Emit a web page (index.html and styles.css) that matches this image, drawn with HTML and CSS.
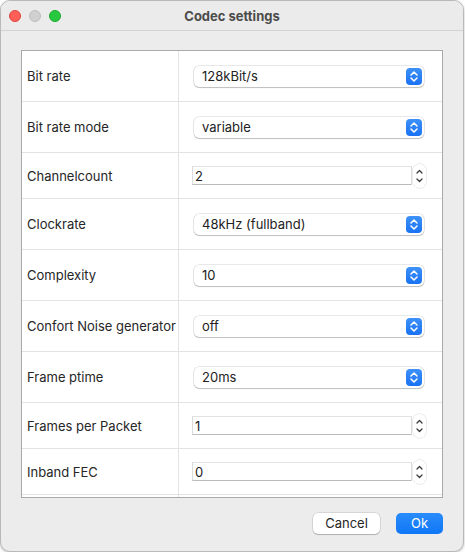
FILE: index.html
```html
<!DOCTYPE html>
<html>
<head>
<meta charset="utf-8">
<link rel="stylesheet" href="styles.css">
</head>
<body>
<div class="window">
  <div class="titlebar">
    <div class="lights">
      <span class="light red"></span>
      <span class="light gray"></span>
      <span class="light green"></span>
    </div>
    <div class="title">Codec settings</div>
  </div>
  <div class="content">
    <div class="table">
      <div class="row combo-row">
        <div class="label">Bit rate</div>
        <div class="value"><div class="popup"><span class="ptext">128kBit/s</span><span class="pbtn"><svg width="16" height="17" viewBox="0 0 16 17"><path d="M5 7 L8 4 L11 7 M5 10 L8 13 L11 10" fill="none" stroke="#fff" stroke-width="1.5" stroke-linecap="round" stroke-linejoin="round"/></svg></span></div></div>
      </div>
      <div class="row combo-row">
        <div class="label">Bit rate mode</div>
        <div class="value"><div class="popup"><span class="ptext">variable</span><span class="pbtn"><svg width="16" height="17" viewBox="0 0 16 17"><path d="M5 7 L8 4 L11 7 M5 10 L8 13 L11 10" fill="none" stroke="#fff" stroke-width="1.5" stroke-linecap="round" stroke-linejoin="round"/></svg></span></div></div>
      </div>
      <div class="row spin-row">
        <div class="label">Channelcount</div>
        <div class="value"><div class="field">2</div><span class="stepper"><svg width="13" height="24" viewBox="0 0 13 24"><path d="M4 9 L6.5 6.5 L9 9 M4 15 L6.5 17.5 L9 15" fill="none" stroke="#3a3a3a" stroke-width="1.3" stroke-linecap="round" stroke-linejoin="round"/></svg></span></div>
      </div>
      <div class="row combo-row">
        <div class="label">Clockrate</div>
        <div class="value"><div class="popup"><span class="ptext">48kHz (fullband)</span><span class="pbtn"><svg width="16" height="17" viewBox="0 0 16 17"><path d="M5 7 L8 4 L11 7 M5 10 L8 13 L11 10" fill="none" stroke="#fff" stroke-width="1.5" stroke-linecap="round" stroke-linejoin="round"/></svg></span></div></div>
      </div>
      <div class="row combo-row">
        <div class="label">Complexity</div>
        <div class="value"><div class="popup"><span class="ptext">10</span><span class="pbtn"><svg width="16" height="17" viewBox="0 0 16 17"><path d="M5 7 L8 4 L11 7 M5 10 L8 13 L11 10" fill="none" stroke="#fff" stroke-width="1.5" stroke-linecap="round" stroke-linejoin="round"/></svg></span></div></div>
      </div>
      <div class="row combo-row">
        <div class="label">Confort Noise generator</div>
        <div class="value"><div class="popup"><span class="ptext">off</span><span class="pbtn"><svg width="16" height="17" viewBox="0 0 16 17"><path d="M5 7 L8 4 L11 7 M5 10 L8 13 L11 10" fill="none" stroke="#fff" stroke-width="1.5" stroke-linecap="round" stroke-linejoin="round"/></svg></span></div></div>
      </div>
      <div class="row combo-row">
        <div class="label">Frame ptime</div>
        <div class="value"><div class="popup"><span class="ptext">20ms</span><span class="pbtn"><svg width="16" height="17" viewBox="0 0 16 17"><path d="M5 7 L8 4 L11 7 M5 10 L8 13 L11 10" fill="none" stroke="#fff" stroke-width="1.5" stroke-linecap="round" stroke-linejoin="round"/></svg></span></div></div>
      </div>
      <div class="row spin-row">
        <div class="label">Frames per Packet</div>
        <div class="value"><div class="field">1</div><span class="stepper"><svg width="13" height="24" viewBox="0 0 13 24"><path d="M4 9 L6.5 6.5 L9 9 M4 15 L6.5 17.5 L9 15" fill="none" stroke="#3a3a3a" stroke-width="1.3" stroke-linecap="round" stroke-linejoin="round"/></svg></span></div>
      </div>
      <div class="row spin-row">
        <div class="label">Inband FEC</div>
        <div class="value"><div class="field">0</div><span class="stepper"><svg width="13" height="24" viewBox="0 0 13 24"><path d="M4 9 L6.5 6.5 L9 9 M4 15 L6.5 17.5 L9 15" fill="none" stroke="#3a3a3a" stroke-width="1.3" stroke-linecap="round" stroke-linejoin="round"/></svg></span></div>
      </div>
      <div class="filler">
        <div class="fl"></div><div class="fr"></div>
      </div>
    </div>
    <div class="buttons">
      <button class="btn cancel">Cancel</button>
      <button class="btn ok">Ok</button>
    </div>
  </div>
</div>
</body>
</html>
```
FILE: styles.css
```css
html, body {
  margin: 0;
  padding: 0;
  background: #ffffff;
}
body {
  font-family: Inter, "Liberation Sans", Arial, sans-serif;
  font-size: 13px;
  color: #262626;
}
.window {
  box-sizing: border-box;
  width: 464px;
  height: 552px;
  border: 1px solid #b9b9b9;
  border-radius: 10px;
  background: #ececec;
  overflow: hidden;
  display: flex;
  flex-direction: column;
  box-shadow: 0 1px 3px rgba(0,0,0,0.25);
}
.titlebar {
  box-sizing: border-box;
  height: 30px;
  border-bottom: 1px solid #d3d3d3;
  background: #ebebeb;
  display: flex;
  align-items: center;
  position: relative;
}
.lights {
  display: flex;
  gap: 8px;
  padding-left: 8px;
}
.light {
  width: 12px;
  height: 12px;
  border-radius: 50%;
  box-sizing: border-box;
}
.red { background: #fe5f57; border: 0.5px solid #e0443e; }
.gray { background: #d0d0d0; border: 0.5px solid #bdbdbd; }
.green { background: #28c840; border: 0.5px solid #1aab29; }
.title {
  position: absolute;
  left: 0;
  right: 0;
  top: 0;
  bottom: 0;
  display: flex;
  align-items: center;
  justify-content: center;
  font-weight: bold;
  font-size: 13px;
  color: #4b4b4b;
}
.content {
  padding: 19px 20px 0 20px;
  display: flex;
  flex-direction: column;
}
.table {
  box-sizing: border-box;
  height: 448px;
  border: 1px solid #a9a9a9;
  background: #ffffff;
  display: flex;
  flex-direction: column;
}
.row {
  display: grid;
  grid-template-columns: 157px 1fr;
  border-bottom: 1px solid #e3e3e3;
}
.combo-row { height: 50px; }
.spin-row { height: 45px; }
.label {
  display: flex;
  align-items: center;
  padding-left: 5px;
  border-right: 1px solid #e3e3e3;
  white-space: nowrap;
}
.value {
  display: flex;
  align-items: center;
}
.popup {
  box-sizing: border-box;
  margin-left: 15px;
  width: 230px;
  height: 21px;
  background: #ffffff;
  border-radius: 5px;
  box-shadow: 0 0 0 0.5px rgba(0,0,0,0.18), 0 1px 1px rgba(0,0,0,0.18);
  display: flex;
  align-items: center;
  justify-content: space-between;
  padding: 0 2px 0 8px;
}
.ptext { color: #222; }
.pbtn {
  width: 16px;
  height: 17px;
  border-radius: 4px;
  background: linear-gradient(#3d91f8, #1a72f3);
  display: flex;
}
.field {
  box-sizing: border-box;
  margin-left: 13px;
  width: 220px;
  height: 19px;
  background: #fff;
  border: 1px solid #dcdcdc;
  border-bottom-color: #bcbcbc;
  border-top-color: #e2e2e2;
  padding: 1px 0 0 2px;
  line-height: 16px;
  color: #222;
}
.stepper {
  box-sizing: border-box;
  width: 13px;
  height: 24px;
  margin-left: 1px;
  border-radius: 6px;
  box-shadow: 0 0 0 0.5px rgba(0,0,0,0.15);
  background: #fff;
  display: flex;
}
.filler {
  flex: 1;
  display: grid;
  grid-template-columns: 157px 1fr;
}
.fl { border-right: 1px solid #e3e3e3; }
.buttons {
  display: flex;
  justify-content: flex-end;
  gap: 16px;
  margin-top: 15px;
}
.btn {
  font-family: Inter, "Liberation Sans", Arial, sans-serif;
  font-size: 13px;
  height: 21px;
  border: none;
  border-radius: 5px;
  padding: 0;
  line-height: 21px;
}
.cancel {
  width: 67px;
  background: #ffffff;
  color: #262626;
  box-shadow: 0 0 0 0.5px rgba(0,0,0,0.18), 0 1px 1px rgba(0,0,0,0.18);
}
.ok {
  width: 47px;
  background: linear-gradient(#2a8cfb, #0f77f6);
  color: #ffffff;
}
```
